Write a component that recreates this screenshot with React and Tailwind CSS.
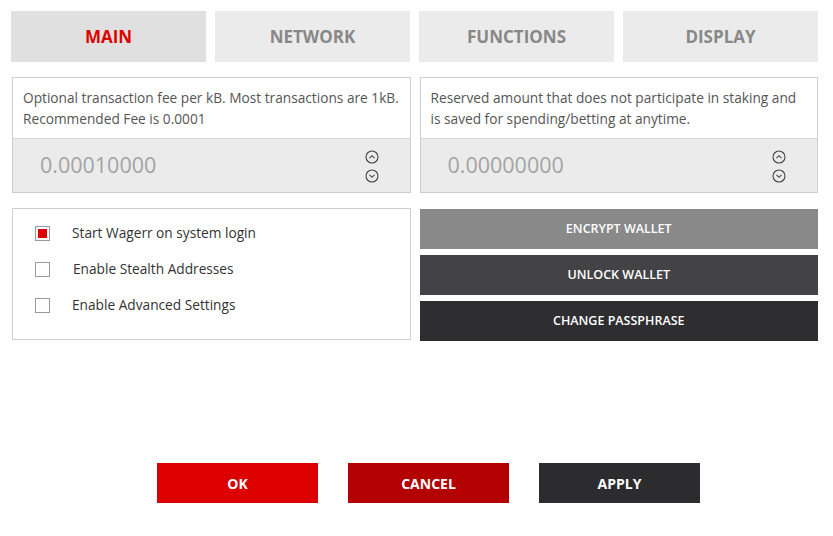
import React, { useState } from 'react';

const tabs = ['MAIN', 'NETWORK', 'FUNCTIONS', 'DISPLAY'];

const SpinIcons = () => (
    <div className="flex flex-col gap-[5px] text-[#444] pt-[1px]">
        <svg width="14" height="14" viewBox="0 0 14 14" fill="none" stroke="currentColor" strokeWidth="1.1">
            <circle cx="7" cy="7" r="6" />
            <path d="M4.5 8.2 L7 5.7 L9.5 8.2" />
        </svg>
        <svg width="14" height="14" viewBox="0 0 14 14" fill="none" stroke="currentColor" strokeWidth="1.1">
            <circle cx="7" cy="7" r="6" />
            <path d="M4.5 5.8 L7 8.3 L9.5 5.8" />
        </svg>
    </div>
);

const AmountBox = ({ text, value }) => (
    <div className="border border-[#cfcfcf] flex flex-col">
        <div className="h-[60px] bg-white px-[10px] pt-[9px] text-[13.7px] leading-[21px] text-[#555]">
            {text}
        </div>
        <div className="h-[54px] bg-[#ebebeb] border-t border-[#d6d6d6] flex items-center justify-between pl-[27px] pr-[31px]">
            <span className="text-[21.5px] text-[#a3a3a3]">{value}</span>
            <SpinIcons />
        </div>
    </div>
);

const CheckRow = ({ label, checked, onToggle, labelPad }) => (
    <div className="flex items-center h-[36px] cursor-pointer" onClick={onToggle}>
        <span className="w-[15px] h-[15px] border border-[#9a9a9a] bg-white flex items-center justify-center">
            {checked && <span className="w-[9px] h-[9px] bg-[#dd0000]" />}
        </span>
        <span className={`${labelPad ? 'ml-[23px]' : 'ml-[22px]'} text-[13.7px] text-[#333]`}>{label}</span>
    </div>
);

const App = () => {
    const [active, setActive] = useState(0);
    const [checks, setChecks] = useState([true, false, false]);

    const toggle = (i) => setChecks(checks.map((c, j) => (j === i ? !c : c)));

    return (
        <div className="w-[833px] h-[536px] bg-white font-['Open_Sans',sans-serif] pl-[11px] pr-[15px] pt-[11px]">
            <div className="grid grid-cols-4 gap-[9px]">
                {tabs.map((t, i) => (
                    <button
                        key={t}
                        onClick={() => setActive(i)}
                        className={`h-[51px] text-[17px] font-bold ${i === active ? 'bg-[#e0e0e0] text-[#dd0000]' : 'bg-[#ebebeb] text-[#888]'}`}
                    >
                        {t}
                    </button>
                ))}
            </div>

            <div className="grid grid-cols-2 gap-[9px] mt-[15px] pl-[1px]">
                <AmountBox
                    text="Optional transaction fee per kB. Most transactions are 1kB. Recommended Fee is 0.0001"
                    value="0.00010000"
                />
                <AmountBox
                    text="Reserved amount that does not participate in staking and is saved for spending/betting at anytime."
                    value="0.00000000"
                />
            </div>

            <div className="grid grid-cols-2 gap-[9px] mt-[15px] pl-[1px]">
                <div className="h-[132px] border border-[#cfcfcf] pl-[22px] pt-[6px]">
                    <CheckRow label="Start Wagerr on system login" checked={checks[0]} onToggle={() => toggle(0)} />
                    <CheckRow label="Enable Stealth Addresses" checked={checks[1]} onToggle={() => toggle(1)} labelPad />
                    <CheckRow label="Enable Advanced Settings" checked={checks[2]} onToggle={() => toggle(2)} />
                </div>
                <div className="flex flex-col gap-[6px] pt-[1px]">
                    <button className="h-[40px] bg-[#888988] text-white text-[12.5px] font-semibold">ENCRYPT WALLET</button>
                    <button className="h-[40px] bg-[#434345] text-white text-[12.5px] font-semibold">UNLOCK WALLET</button>
                    <button className="h-[40px] bg-[#2e2e30] text-white text-[12.5px] font-semibold">CHANGE PASSPHRASE</button>
                </div>
            </div>

            <div className="flex justify-center gap-[30px] mt-[122px] pl-[28px]">
                <button className="w-[161px] h-[40px] bg-[#dd0000] text-white text-[14px] font-bold">OK</button>
                <button className="w-[161px] h-[40px] bg-[#b30000] text-white text-[14px] font-bold">CANCEL</button>
                <button className="w-[161px] h-[40px] bg-[#2c2c2e] text-white text-[14px] font-bold">APPLY</button>
            </div>
        </div>
    );
};

export default App;
